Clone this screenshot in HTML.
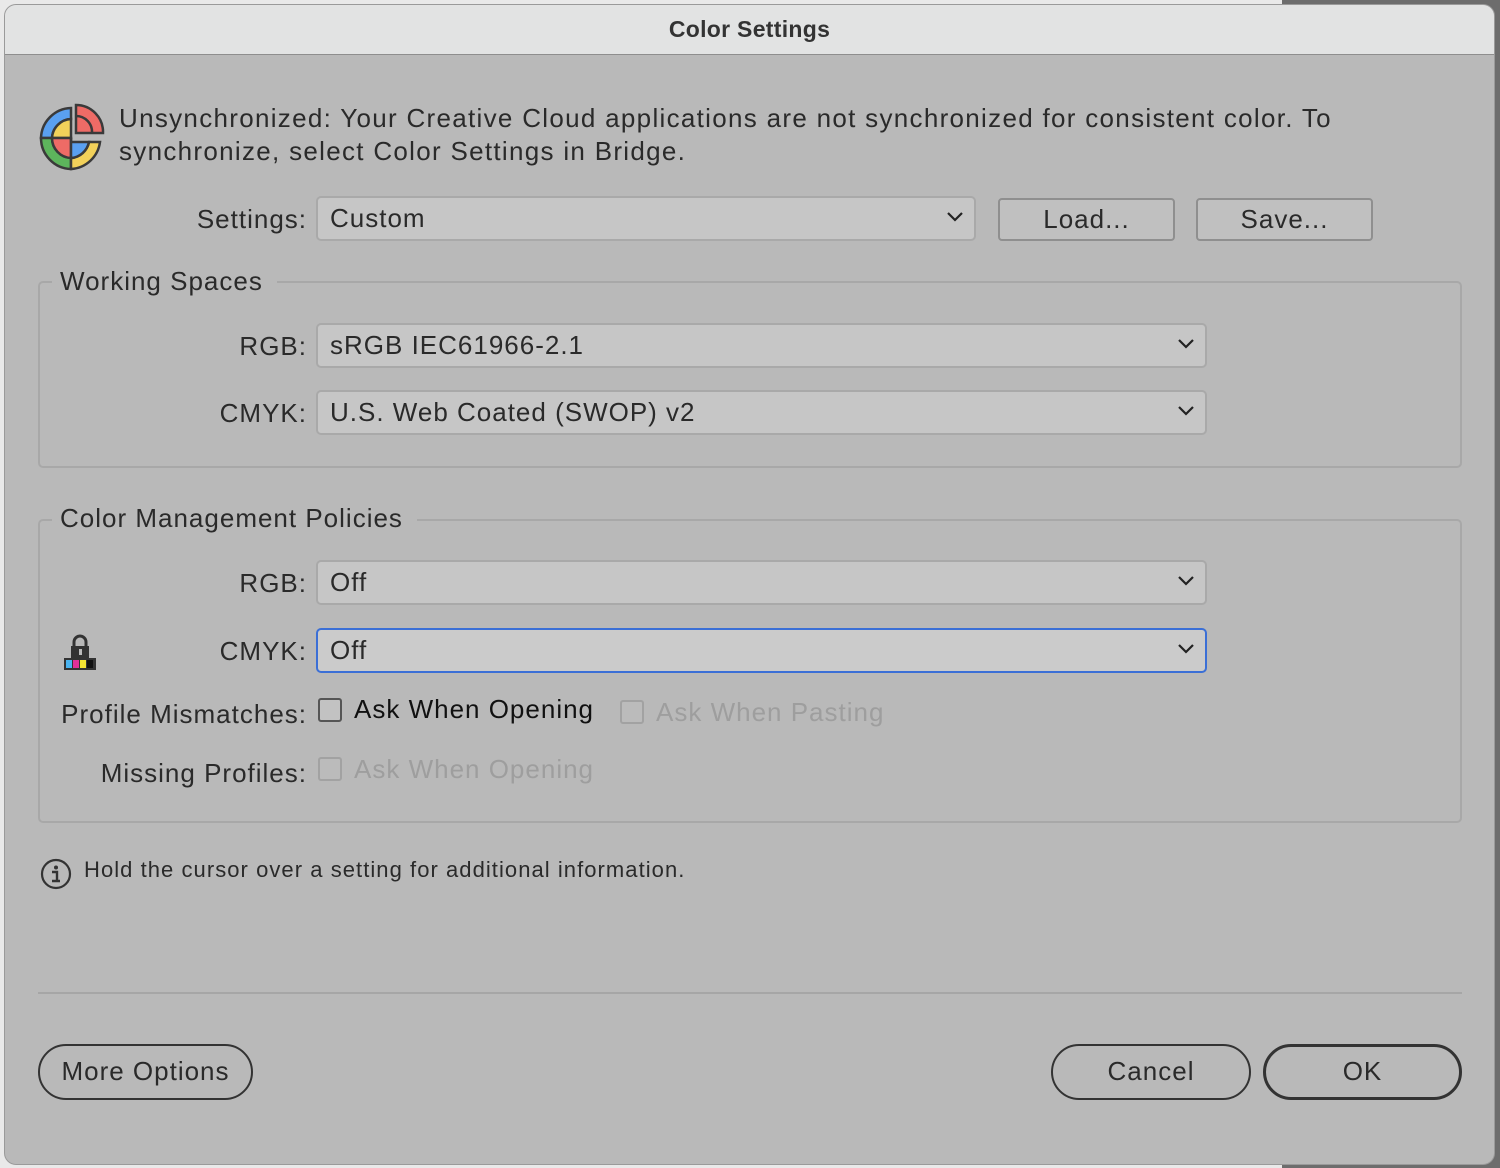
<!DOCTYPE html>
<html><head><meta charset="utf-8"><style>
*{margin:0;padding:0;box-sizing:border-box}
body{width:1500px;height:1168px;position:relative;overflow:hidden;background:#e9e9e9;font-family:"Liberation Sans",sans-serif;color:#2a2a2a;letter-spacing:1px}
.a{position:absolute}
.dlg{left:4px;top:4px;width:1491px;height:1161px;background:#b9b9b9;border-radius:12px;overflow:hidden;border:1px solid #9a9a9a}
.title{left:0;top:0;width:100%;height:50px;background:#e2e3e3;border-bottom:1px solid #8e8e8e;text-align:center;font-weight:bold;font-size:23px;line-height:48px;color:#333;letter-spacing:0.3px}
.t{font-size:26px;white-space:nowrap}
.r{right:1193px;text-align:right}
.dd{background:#c6c6c6;border:2px solid #a9a9a9;border-radius:5px;font-size:26px;padding-left:12px;line-height:40px}
.dd svg{position:absolute;right:10px;top:13px}
.btn{background:#c0c0c0;border:2px solid #8f8f8f;border-radius:4px;font-size:26px;text-align:center;line-height:39px}
.grp{border:2px solid #a8a8a8;border-radius:5px}
.leg{background:#b9b9b9;padding:0 14px 0 8px;font-size:26px}
.cb{width:24px;height:24px;border:2px solid #555;border-radius:3px;background:#c2c2c2}
.cbd{border-color:#a2a2a2;background:#bbb}
.pill{border:2px solid #333;border-radius:28px;font-size:26px;text-align:center;line-height:51px}
</style></head><body>
<div class="a" style="left:1282px;top:0;width:218px;height:1168px;background:#6d6d6d"></div>
<div class="a dlg">
<div class="a title">Color Settings</div>
</div>
<svg class="a" style="left:38px;top:102px" width="68" height="70" viewBox="0 0 68 70">
<g stroke="#3a3a3a" stroke-width="2.5">
<path d="M33 6 A31 31 0 0 0 3 36 L14 36 A20 20 0 0 1 33 17 Z" fill="#5aa0f0"/>
<path d="M3 36 A31 31 0 0 0 33 67 L33 56 A20 20 0 0 1 14 36 Z" fill="#5db55c"/>
<path d="M33 67 A31 31 0 0 0 62 40 L51 40 A20 20 0 0 1 33 56 Z" fill="#f2d15a"/>
<path d="M33 17 A20 20 0 0 0 14 36 L33 36 Z" fill="#f2d15a"/>
<path d="M14 36 A20 20 0 0 0 33 56 L33 36 Z" fill="#ee6b66"/>
<path d="M33 36 L33 56 A20 20 0 0 0 51 40 L33 40" fill="#5aa0f0"/>
<path d="M38 3 A27 27 0 0 1 65 31 L38 31 Z" fill="#ee6b66"/>
<path d="M38 14 A16 16 0 0 1 54 31" fill="none"/>
</g></svg>
<div class="a t" style="left:119px;top:102px;line-height:33px;color:#2a2a2a;letter-spacing:1.3px">Unsynchronized: Your Creative Cloud applications are not synchronized for consistent color. To<br>synchronize, select Color Settings in Bridge.</div>

<div class="a t r" style="top:204px">Settings:</div>
<div class="a dd" style="left:316px;top:196px;width:660px;height:45px">Custom<svg width="18" height="12"><path d="M2 2l7 7 7-7" stroke="#222" stroke-width="2.2" fill="none"/></svg></div>
<div class="a btn" style="left:998px;top:198px;width:177px;height:43px">Load...</div>
<div class="a btn" style="left:1196px;top:198px;width:177px;height:43px">Save...</div>

<div class="a grp" style="left:38px;top:281px;width:1424px;height:187px"></div>
<div class="a leg" style="left:52px;top:266px">Working Spaces</div>
<div class="a t r" style="top:331px">RGB:</div>
<div class="a dd" style="left:316px;top:323px;width:891px;height:45px">sRGB IEC61966-2.1<svg width="18" height="12"><path d="M2 2l7 7 7-7" stroke="#222" stroke-width="2.2" fill="none"/></svg></div>
<div class="a t r" style="top:398px">CMYK:</div>
<div class="a dd" style="left:316px;top:390px;width:891px;height:45px">U.S. Web Coated (SWOP) v2<svg width="18" height="12"><path d="M2 2l7 7 7-7" stroke="#222" stroke-width="2.2" fill="none"/></svg></div>

<div class="a grp" style="left:38px;top:519px;width:1424px;height:304px"></div>
<div class="a leg" style="left:52px;top:503px">Color Management Policies</div>
<div class="a t r" style="top:568px">RGB:</div>
<div class="a dd" style="left:316px;top:560px;width:891px;height:45px">Off<svg width="18" height="12"><path d="M2 2l7 7 7-7" stroke="#222" stroke-width="2.2" fill="none"/></svg></div>
<svg class="a" style="left:64px;top:634px" width="32" height="36" viewBox="0 0 32 36">
<path d="M10 12V8a6 6 0 0 1 12 0v4" stroke="#333" stroke-width="3" fill="none"/>
<rect x="7" y="12" width="18" height="13" fill="#333"/><rect x="15" y="15" width="3" height="6" fill="#bbb"/>
<rect x="0" y="24" width="32" height="12" fill="#333"/>
<rect x="2" y="26" width="6" height="8" fill="#4ab4f0"/><rect x="9" y="26" width="6" height="8" fill="#e0309a"/><rect x="16" y="26" width="6" height="8" fill="#f3e433"/><rect x="23" y="26" width="6" height="8" fill="#111"/>
</svg>
<div class="a t r" style="top:636px">CMYK:</div>
<div class="a dd" style="left:316px;top:628px;width:891px;height:45px;border-color:#3b6fd6;background:#cbcbcb">Off<svg width="18" height="12"><path d="M2 2l7 7 7-7" stroke="#222" stroke-width="2.2" fill="none"/></svg></div>

<div class="a t r" style="top:699px">Profile Mismatches:</div>
<div class="a cb" style="left:318px;top:698px"></div>
<div class="a t" style="left:354px;top:694px;color:#111">Ask When Opening</div>
<div class="a cb cbd" style="left:620px;top:700px"></div>
<div class="a t" style="left:656px;top:697px;color:#9e9e9e">Ask When Pasting</div>
<div class="a t r" style="top:758px">Missing Profiles:</div>
<div class="a cb cbd" style="left:318px;top:757px"></div>
<div class="a t" style="left:354px;top:754px;color:#9e9e9e">Ask When Opening</div>

<svg class="a" style="left:40px;top:858px" width="32" height="32"><circle cx="16" cy="16" r="14" stroke="#333" stroke-width="2.2" fill="none"/><circle cx="16" cy="9.5" r="2" fill="#333"/><path d="M12 14h5v9M12 23h8" stroke="#333" stroke-width="2.4" fill="none"/></svg>
<div class="a" style="left:84px;top:857px;font-size:22px;letter-spacing:1.05px">Hold the cursor over a setting for additional information.</div>

<div class="a" style="left:38px;top:992px;width:1424px;height:2px;background:#a6a6a6"></div>
<div class="a pill" style="left:38px;top:1044px;width:215px;height:56px">More Options</div>
<div class="a pill" style="left:1051px;top:1044px;width:200px;height:56px">Cancel</div>
<div class="a pill" style="left:1263px;top:1044px;width:199px;height:56px;border-width:3.5px;line-height:49px">OK</div>
</body></html>
